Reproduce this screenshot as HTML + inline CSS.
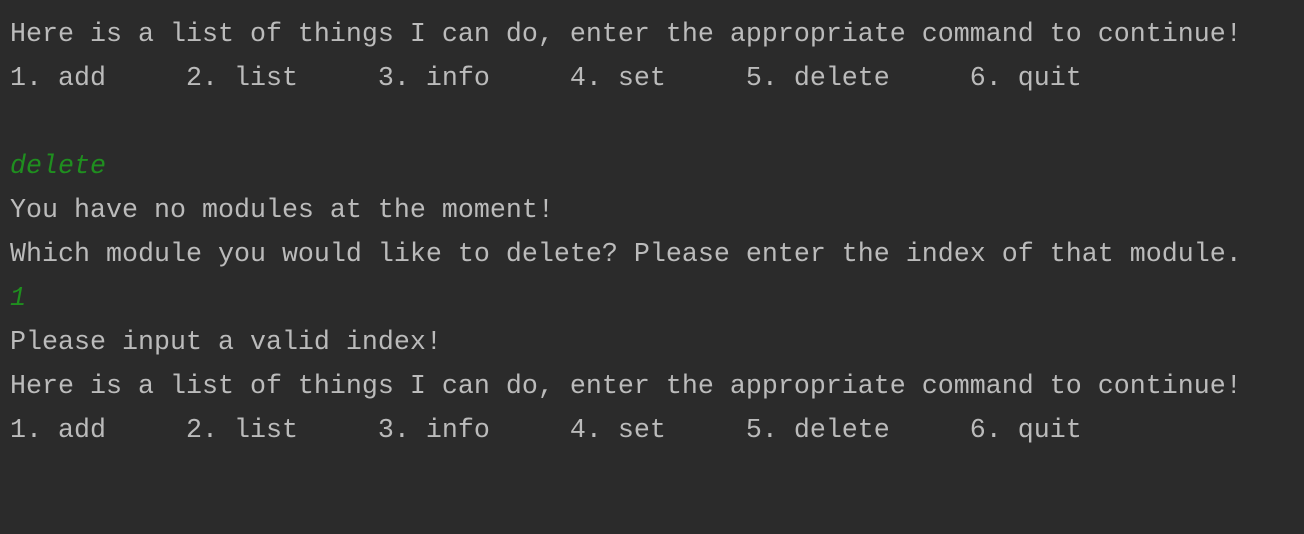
<!DOCTYPE html>
<html><head><meta charset="utf-8"><style>
html,body{margin:0;padding:0;background:#2b2b2b;width:1304px;height:534px;overflow:hidden}
pre{margin:0;padding:13px 0 0 10px;font-family:"Liberation Mono","DejaVu Sans Mono",monospace;font-size:26.67px;line-height:44px;color:#bbbbbb}
.g{color:#1f8f1f;font-style:italic}
</style></head><body><pre>Here is a list of things I can do, enter the appropriate command to continue!
1. add     2. list     3. info     4. set     5. delete     6. quit

<span class="g">delete</span>
You have no modules at the moment!
Which module you would like to delete? Please enter the index of that module.
<span class="g">1</span>
Please input a valid index!
Here is a list of things I can do, enter the appropriate command to continue!
1. add     2. list     3. info     4. set     5. delete     6. quit
</pre></body></html>
